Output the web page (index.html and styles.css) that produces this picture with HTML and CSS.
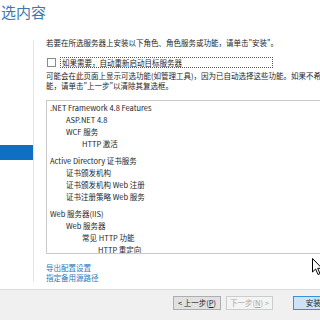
FILE: index.html
```html
<!DOCTYPE html>
<html lang="zh-CN">
<head>
<meta charset="utf-8">
<link rel="stylesheet" href="styles.css">
</head>
<body>
<div class="page">
  <header class="header"><h1 class="title">选内容</h1></header>
  <div class="main">
    <aside class="sidebar"><div class="nav-selected"></div></aside>
    <section class="content">
      <p class="intro">若要在所选服务器上安装以下角色、角色服务或功能，请单击"安装"。</p>
      <label class="check-row"><span class="checkbox"></span><span class="check-label">如果需要，自动重新启动目标服务器</span></label>
      <p class="note">可能会在此页面上显示可选功能(如管理工具)，因为已自动选择这些功能。如果不希望安装这些可选功<br>能，请单击"上一步"以清除其复选框。</p>
      <div class="listbox">
        <div class="group">
          <div class="item l0">.NET Framework 4.8 Features</div>
          <div class="item l1">ASP.NET 4.8</div>
          <div class="item l1">WCF 服务</div>
          <div class="item l2">HTTP 激活</div>
        </div>
        <div class="group">
          <div class="item l0">Active Directory 证书服务</div>
          <div class="item l1">证书颁发机构</div>
          <div class="item l1">证书颁发机构 Web 注册</div>
          <div class="item l1">证书注册策略 Web 服务</div>
        </div>
        <div class="group">
          <div class="item l0">Web 服务器(IIS)</div>
          <div class="item l1">Web 服务器</div>
          <div class="item l2">常见 HTTP 功能</div>
          <div class="item l3">HTTP 重定向</div>
        </div>
      </div>
      <div class="links">
        <a class="link">导出配置设置</a>
        <a class="link">指定备用源路径</a>
      </div>
    </section>
  </div>
  <footer class="footer">
    <button class="btn">&lt; 上一步(<u>P</u>)</button>
    <button class="btn disabled">下一步(<u>N</u>) &gt;</button>
    <button class="btn primary">安装(<u>I</u>)</button>
  </footer>
  <svg class="cursor" width="12" height="18" viewBox="0 0 12 18"><path d="M0.5 0.5 L0.5 14 L3.6 11 L6 16.5 L8 15.6 L5.7 10.3 L10 10.3 Z" fill="#fff" stroke="#000" stroke-width="1"/></svg>
</div>
</body>
</html>
```
FILE: styles.css
```css
html, body {
  margin: 0;
  padding: 0;
}
body {
  width: 320px;
  height: 320px;
  overflow: hidden;
  background: #fff;
  font-family: "Noto Sans CJK SC", "Noto Sans", sans-serif;
  font-size: 7.5px;
  color: #1e1e1e;
}
.page {
  position: relative;
  width: 320px;
  height: 320px;
  display: flex;
  flex-direction: column;
}
.header {
  height: 36px;
  flex: none;
}
.title {
  margin: 0;
  padding: 2px 0 0 1px;
  font-size: 15px;
  line-height: 20px;
  font-weight: 400;
  color: #3a78b0;
}
.main {
  flex: 1;
  display: flex;
  overflow: hidden;
}
.sidebar {
  flex: none;
  width: 33px;
  height: 242px;
  margin-top: 4px;
  border-right: 1px solid #e6e6e6;
}
.nav-selected {
  margin-top: 105px;
  height: 15px;
  background: #0f6fc2;
}
.content {
  flex: none;
  width: 420px;
  padding-left: 12px;
}
.intro {
  margin: 2px 0 0;
  line-height: 10px;
}
.check-row {
  display: flex;
  align-items: center;
  height: 12px;
  margin-top: 8px;
}
.checkbox {
  width: 7px;
  height: 7px;
  border: 1px solid #8a8a8a;
  background: #fff;
  margin: 0 6px 0 1px;
}
.check-label {
  width: 210px;
  height: 9px;
  line-height: 9px;
  border: 1px dotted #555;
  padding-left: 1px;
  margin-left: -2px;
}
.note {
  margin: 3px 0 0;
  line-height: 10px;
}
.listbox {
  margin-top: 9px;
  height: 154px;
  border: 1px solid #c9c9c9;
  overflow: hidden;
  padding: 1px 0 0 3px;
  box-sizing: border-box;
}
.group + .group {
  margin-top: 5px;
}
.item {
  line-height: 12px;
  white-space: nowrap;
}
.l1 { padding-left: 16px; }
.l2 { padding-left: 32px; }
.l3 { padding-left: 48px; }
.links {
  margin-top: 9px;
  display: flex;
  flex-direction: column;
}
.link {
  line-height: 10px;
  color: #2a78b8;
}
.footer {
  flex: none;
  height: 24px;
  background: #f0f0f0;
  border-top: 1px solid #dcdcdc;
  display: flex;
  align-items: flex-start;
  padding: 6px 0 0 173px;
  gap: 5px;
}
.btn {
  flex: none;
  width: 48px;
  height: 14px;
  padding: 0;
  font-family: inherit;
  font-size: 7.5px;
  line-height: 12px;
  color: #1e1e1e;
  background: #e1e1e1;
  border: 1px solid #adadad;
  white-space: nowrap;
}
.btn.disabled {
  width: 47px;
  color: #a8a8a8;
  background: #f4f4f4;
  border-color: #cccccc;
}
.btn.primary {
  margin-left: 15px;
  background: #cce4f7;
  border-color: #3c8fd6;
}
.cursor {
  position: absolute;
  left: 312px;
  top: 258px;
}
```
